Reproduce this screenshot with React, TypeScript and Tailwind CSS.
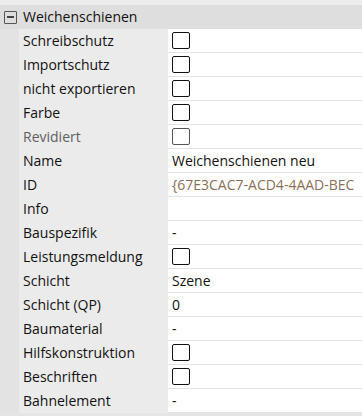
import React from 'react';

type Row = {
  label: string;
  kind: 'check' | 'text' | 'empty';
  value?: string;
  muted?: boolean;
  valueClass?: string;
};

const rows: Row[] = [
  { label: 'Schreibschutz', kind: 'check' },
  { label: 'Importschutz', kind: 'check' },
  { label: 'nicht exportieren', kind: 'check' },
  { label: 'Farbe', kind: 'check' },
  { label: 'Revidiert', kind: 'check', muted: true },
  { label: 'Name', kind: 'text', value: 'Weichenschienen neu' },
  { label: 'ID', kind: 'text', value: '{67E3CAC7-ACD4-4AAD-BEC', valueClass: 'text-[#8a6f58]' },
  { label: 'Info', kind: 'empty' },
  { label: 'Bauspezifik', kind: 'text', value: '-' },
  { label: 'Leistungsmeldung', kind: 'check' },
  { label: 'Schicht', kind: 'text', value: 'Szene' },
  { label: 'Schicht (QP)', kind: 'text', value: '0' },
  { label: 'Baumaterial', kind: 'text', value: '-' },
  { label: 'Hilfskonstruktion', kind: 'check' },
  { label: 'Beschriften', kind: 'check' },
  { label: 'Bahnelement', kind: 'text', value: '-' },
];

const Checkbox: React.FC<{ muted?: boolean }> = ({ muted }) => (
  <div
    className={`w-[18px] h-[17px] rounded-[2px] border bg-white ${
      muted ? 'border-[#555]' : 'border-[#111]'
    }`}
  />
);

const PropertyRow: React.FC<{ row: Row }> = ({ row }) => (
  <div className="flex h-6">
    <div
      className={`w-[149px] shrink-0 pl-1 flex items-center bg-[#ebebeb] ${
        row.muted ? 'text-[#5f5f5f]' : 'text-[#111]'
      }`}
    >
      {row.label}
    </div>
    <div className="flex-1 min-w-0 bg-white border-b border-[#e4e4e4] flex items-center pl-1 overflow-hidden whitespace-nowrap">
      {row.kind === 'check' && <Checkbox muted={row.muted} />}
      {row.kind === 'text' && (
        <span className={row.valueClass ?? 'text-[#111]'}>{row.value}</span>
      )}
    </div>
  </div>
);

export default function App() {
  return (
    <div
      className="w-[362px] h-[416px] bg-[#ececec] overflow-hidden text-[14px] leading-none"
      style={{ fontFamily: '"Open Sans", "Noto Sans", sans-serif' }}
    >
      <div className="h-[5px]" />
      <div className="h-6 bg-[#dedede] flex items-center pl-1 text-[#111]">
        <div className="w-[13px] h-[13px] border border-[#555] rounded-[1px] flex items-center justify-center">
          <div className="w-[7px] h-[1.5px] bg-[#444]" />
        </div>
        <span className="ml-[6px]">Weichenschienen</span>
      </div>
      <div className="flex bg-[#e3e3e3]">
        <div className="w-[19px] shrink-0" />
        <div className="flex-1 min-w-0">
          {rows.map((r) => (
            <PropertyRow key={r.label} row={r} />
          ))}
        </div>
      </div>
      <div className="h-[3px] bg-[#e5e5e5]" />
    </div>
  );
}
